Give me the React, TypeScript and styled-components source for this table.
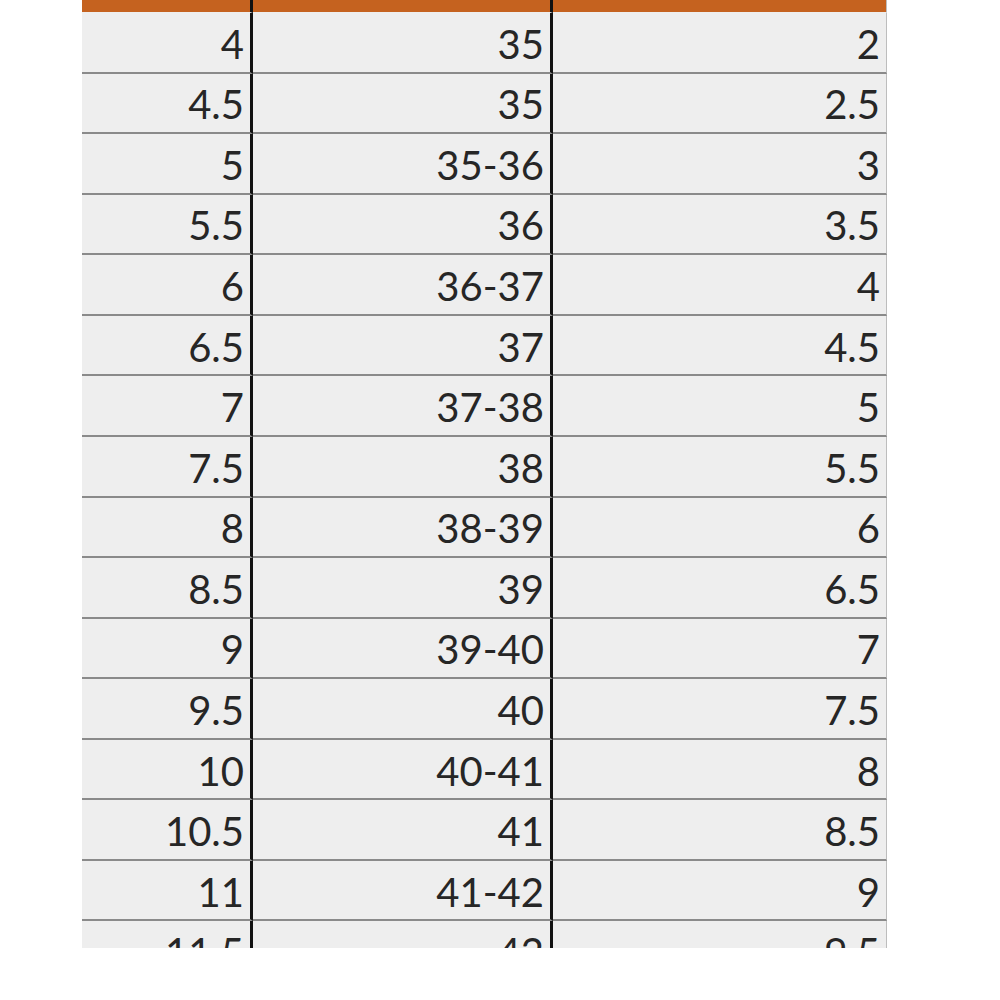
import React from "react";
import styled, { createGlobalStyle } from "styled-components";

const Global = createGlobalStyle`
  html, body { margin: 0; padding: 0; background: #ffffff; }
  #root { width: 1000px; height: 1000px; }
`;

const Page = styled.div`
  width: 1000px;
  height: 1000px;
  background: #ffffff;
  padding-left: 82px;
  box-sizing: border-box;
`;

const Sheet = styled.div`
  width: 805px;
  height: 948px;
  overflow: hidden;
  background: #eeeeee;
  font-family: Lato, "Open Sans", sans-serif;
`;

const Grid = styled.div`
  display: grid;
  grid-template-columns: 171px 300px 334px;
`;

const HeaderCell = styled.div<{ $last?: boolean }>`
  height: 12px;
  background: #c5621f;
  border-right: ${(p) => (p.$last ? "1px solid #bdbdbd" : "3px solid #111111")};
  border-bottom: 1.4px solid #eeeeee;
`;

const Cell = styled.div<{ $last?: boolean }>`
  height: 58.57px;
  box-sizing: border-box;
  height: 60.57px;
  border-bottom: 2px solid #8a8a8a;
  border-right: ${(p) => (p.$last ? "1px solid #bdbdbd" : "3px solid #111111")};
  display: flex;
  align-items: center;
  justify-content: flex-end;
  padding: 3px 6px 0 0;
  font-size: 40px;
  color: #262626;
`;

const rows: [string, string, string][] = [
  ["4", "35", "2"],
  ["4.5", "35", "2.5"],
  ["5", "35-36", "3"],
  ["5.5", "36", "3.5"],
  ["6", "36-37", "4"],
  ["6.5", "37", "4.5"],
  ["7", "37-38", "5"],
  ["7.5", "38", "5.5"],
  ["8", "38-39", "6"],
  ["8.5", "39", "6.5"],
  ["9", "39-40", "7"],
  ["9.5", "40", "7.5"],
  ["10", "40-41", "8"],
  ["10.5", "41", "8.5"],
  ["11", "41-42", "9"],
  ["11.5", "42", "9.5"],
];

export default function App() {
  return (
    <Page>
      <Global />
      <Sheet>
        <Grid>
          <HeaderCell />
          <HeaderCell />
          <HeaderCell $last />
          {rows.map((r, i) => (
            <React.Fragment key={i}>
              <Cell>{r[0]}</Cell>
              <Cell>{r[1]}</Cell>
              <Cell $last>{r[2]}</Cell>
            </React.Fragment>
          ))}
        </Grid>
      </Sheet>
    </Page>
  );
}
